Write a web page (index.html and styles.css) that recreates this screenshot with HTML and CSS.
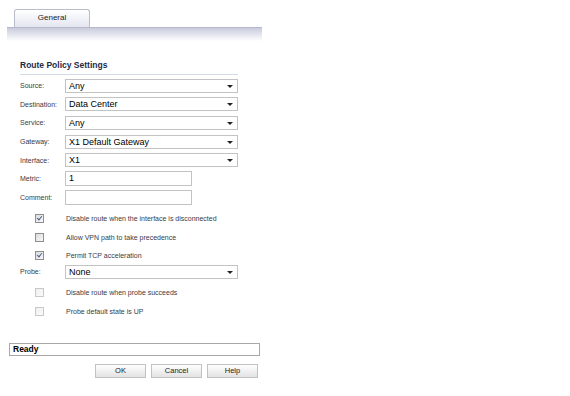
FILE: index.html
```html
<!DOCTYPE html>
<html lang="en">
<head>
  <meta charset="UTF-8" />
  <title>Route Policy</title>
  <link rel="stylesheet" href="styles.css">
</head>
<body>
  <div class="dialog">
    <div class="tabs">
      <div class="tab">General</div>
    </div>
    <div class="tab-bar"></div>

    <div class="panel">
      <div class="section-title">Route Policy Settings</div>

      <div class="rows">
        <div class="row">
          <span class="label">Source:</span>
          <div class="select">Any<span class="arrow"></span></div>
        </div>
        <div class="row">
          <span class="label">Destination:</span>
          <div class="select">Data Center<span class="arrow"></span></div>
        </div>
        <div class="row">
          <span class="label">Service:</span>
          <div class="select">Any<span class="arrow"></span></div>
        </div>
        <div class="row">
          <span class="label">Gateway:</span>
          <div class="select">X1 Default Gateway<span class="arrow"></span></div>
        </div>
        <div class="row">
          <span class="label">Interface:</span>
          <div class="select">X1<span class="arrow"></span></div>
        </div>
        <div class="row">
          <span class="label">Metric:</span>
          <div class="input">1</div>
        </div>
        <div class="row">
          <span class="label">Comment:</span>
          <div class="input"></div>
        </div>

        <!-- checkbox options -->
        <div class="row check-row">
          <span class="cb-cell"><span class="checkbox checked"></span></span>
          <span class="check-label">Disable route when the interface is disconnected</span>
        </div>
        <div class="row check-row">
          <span class="cb-cell"><span class="checkbox"></span></span>
          <span class="check-label">Allow VPN path to take precedence</span>
        </div>
        <div class="row check-row">
          <span class="cb-cell"><span class="checkbox checked"></span></span>
          <span class="check-label">Permit TCP acceleration</span>
        </div>

        <div class="row">
          <span class="label">Probe:</span>
          <div class="select">None<span class="arrow"></span></div>
        </div>
        <div class="row check-row">
          <span class="cb-cell"><span class="checkbox disabled"></span></span>
          <span class="check-label">Disable route when probe succeeds</span>
        </div>
        <div class="row check-row">
          <span class="cb-cell"><span class="checkbox disabled"></span></span>
          <span class="check-label">Probe default state is UP</span>
        </div>
      </div>
    </div>

    <div class="status">Ready</div>

    <div class="buttons">
      <div class="btn">OK</div>
      <div class="btn">Cancel</div>
      <div class="btn">Help</div>
    </div>
  </div>
</body>
</html>
```

FILE: styles.css
```css
body {
  margin: 0;
  background-color: #fff;
  font-family: 'Liberation Sans', Arial, sans-serif;
  color: #333;
}

.dialog {
  width: 270px;
  padding-top: 9px;
}

.tabs {
  display: flex;
  padding-left: 14px;
}

.tab {
  width: 74px;
  height: 17px;
  border: 1px solid #b9bccb;
  border-bottom: none;
  border-radius: 3px 3px 0 0;
  background: linear-gradient(#ffffff, #e4e6f0);
  font-size: 8px;
  color: #222;
  text-align: center;
  line-height: 16px;
}

.tab-bar {
  margin-left: 7px;
  width: 255px;
  height: 13px;
  border-top: 1px solid #b6b9cc;
  background: linear-gradient(#c9cbdc, #ffffff);
}

.panel {
  padding: 19px 0 0 20px;
}

.section-title {
  width: 218px;
  font-size: 8.5px;
  font-weight: bold;
  color: #1c2a48;
  padding-bottom: 4px;
  border-bottom: 1px solid #d3dbe6;
}

.rows {
  display: flex;
  flex-direction: column;
  padding-top: 1.5px;
}

.row {
  display: flex;
  align-items: center;
  height: 18.6px;
}

.check-row {
  box-sizing: border-box;
  padding-top: 5px;
}

.label {
  width: 45px;
  font-size: 7px;
  color: #3a3a44;
}

.select {
  position: relative;
  box-sizing: border-box;
  width: 173px;
  height: 14px;
  border: 1px solid #c3c3c3;
  background: #fff;
  font-size: 9px;
  color: #000;
  line-height: 12px;
  padding-left: 3px;
}

.arrow {
  position: absolute;
  right: 4px;
  top: 5px;
  width: 0;
  height: 0;
  border-left: 3px solid transparent;
  border-right: 3px solid transparent;
  border-top: 3px solid #222;
}

.input {
  box-sizing: border-box;
  width: 127px;
  height: 15px;
  border: 1px solid #c3c3c3;
  background: #fff;
  font-size: 9px;
  color: #000;
  line-height: 13px;
  padding-left: 3px;
}

.cb-cell {
  width: 46px;
  display: flex;
  padding-left: 15px;
  box-sizing: border-box;
}

.checkbox {
  position: relative;
  box-sizing: border-box;
  width: 9px;
  height: 9px;
  border: 1px solid #8f8f8f;
  background: linear-gradient(135deg, #dcdcdc, #f8f8f8);
}

.checkbox.checked::after {
  content: '';
  position: absolute;
  left: 2px;
  top: 0px;
  width: 2px;
  height: 4px;
  border: solid #4a5c94;
  border-width: 0 1.5px 1.5px 0;
  transform: rotate(40deg);
}

.checkbox.disabled {
  border-color: #c9c9c9;
  background: linear-gradient(135deg, #efefef, #fbfbfb);
}

.check-label {
  font-size: 7px;
  color: #3a3a44;
}

.status {
  box-sizing: border-box;
  margin: 25px 0 0 9px;
  width: 251px;
  height: 13px;
  border: 1px solid #a8a8a8;
  font-size: 8.5px;
  font-weight: bold;
  color: #000;
  line-height: 11px;
  padding-left: 3px;
}

.buttons {
  display: flex;
  gap: 5px;
  padding: 8px 0 0 95px;
}

.btn {
  box-sizing: border-box;
  width: 51px;
  height: 14px;
  border: 1px solid #c2c2c2;
  background: linear-gradient(#ffffff, #e2e2e2);
  font-size: 7.5px;
  color: #222;
  text-align: center;
  line-height: 12px;
}
```
